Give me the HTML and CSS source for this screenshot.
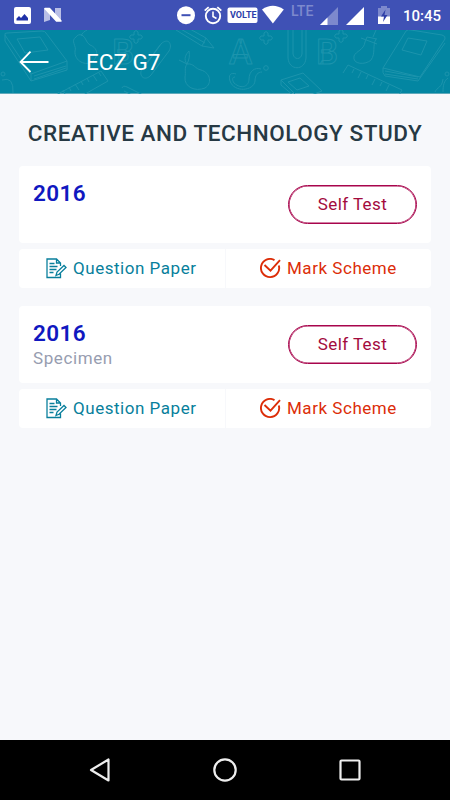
FILE: index.html
```html
<!DOCTYPE html>
<html lang="en">

<head>
    <meta charset="UTF-8">
    <meta name="viewport" content="width=device-width, initial-scale=1.0">
    <title>ECZ G7</title>
    <link rel="stylesheet" href="styles.css">
</head>

<body>
    <div class="status">
        <svg class="status-icons" viewBox="0 0 400 30" aria-hidden="true">
            <!-- picture -->
            <rect x="14" y="7" width="17" height="17" rx="2" fill="#fff" />
            <path d="M16.500 20.500v-2l2.500-2.500 2 2 3.500-4 3.500 4v2.500z" fill="#1f31a8" />
            <!-- android n -->
            <path d="M44 8v14l6-2v-8zM61 8v13l-6-2v-11z" fill="#b9bfe6" />
            <path d="M45 8.500h4.500l11.500 12.500h-4.500z" fill="#fff" stroke="#fff" stroke-width="1.500" stroke-linejoin="round" />
            <!-- do not disturb -->
            <circle cx="186" cy="15.200" r="9" fill="#fff" />
            <path d="M181.500 15.200h9" stroke="#3f51b5" stroke-width="2" />
            <!-- alarm -->
            <g fill="none" stroke="#fff" stroke-width="1.900">
                <circle cx="213" cy="16" r="7.200" />
                <path d="M213 11.500v5l3.500 2" stroke-width="1.600" />
                <path d="M204.700 10.600l4-3.500M221.300 10.600l-4-3.500" />
            </g>
            <rect x="227.500" y="7.500" width="30" height="15.500" rx="2" fill="#fff" />
            <!-- wifi -->
            <path d="M262 9.500q10.800-7.500 21.800 0l-10.900 14z" fill="#fff" />
            <!-- signal -->
            <path d="M338 7v18h-18z" fill="#7d89cd" />
            <path d="M327.500 17.500v7.500h-7.500z" fill="#fff" />
            <path d="M364 7v18h-18z" fill="#fff" />
            <!-- battery -->
            <path d="M378 8h3v-2h6v2h3v9h-12z" fill="#7d89cd" />
            <path d="M378 16.500h12v7.500h-12z" fill="#fff" />
            <path d="M385.500 9.500l-4.500 7h3l-1 5.500 4.500-7h-3z" fill="#3040a8" />
        </svg>
        <span class="volte">VOLTE</span>
        <span class="lte">LTE</span>
        <span class="time">10:45</span>
    </div>

    <header class="topbar">
        <svg class="doodles" viewBox="0 30 450 64" aria-hidden="true">
            <defs>
                <path id="plus" d="M-2-2v-3q2-3 4 0v3h3q3 2 0 4h-3v3q-2 3-4 0v-3h-3q-3-2 0-4z" />
                <path id="ruler" d="M0 21l5 8M5 19l2 4M11 16l2 4M17 13l4 6M23 10l2 4M29 7l2 4M35 4l4 6M41 2l2 3M-4 25l47-25 7 10-30 17" />
            </defs>
            <!-- books -->
            <path d="M5 35q-1-2 2-2l35-2q3 0 4 2l21 28-36 13zM5 35v6l26 40 36-11v-9M31 74v7M34 76l32-10M34 79l32-11M17 39l23-2 8 13-23 3z" />
            <path d="M406 31q2-2 5-1l31 5q4 1 3 4l-25 38-37-9zM383 68q-1 5 2 8l33 5 27-38M385 71l33 6M385 74l33 5M408 38l19 3-6 14-19-5z" />
            <path d="M281 80l22-7 19 18-22 8zM281 80v5l13 11M288 82l12-4 9 8-12 4z" />
            <!-- fruit -->
            <path d="M76 37c-6 4 1 9-1 14-1 10 11 16 18 10 7-7 3-14-3-16-4-2-4-8-8-10-2-1-5 0-6 2zM81 36c1-3 4-5 6-6" />
            <path d="M187 64c7-1 8 5 14 6 10 3 11 14 4 18-10 4-21-1-20-11 1-5-1-9 2-13zM187 64c-4-5-1-10 2-13 1 5 0 9-2 13M187 64l-8-4" />
            <path d="M365 42c-1 8-9 9-11 14-2 9 12 9 17 4 5-7 1-14 5-21M361 38l16 6M365 42l2-5 10 2M376 30l-3 7" />
            <!-- rulers -->
            <use href="#ruler" x="58" y="71" />
            <path d="M343 73l5-8 54 25-4 7M354 69l-2 4M361 72l-3 6M368 75l-2 4M375 79l-3 6M382 82l-2 4M389 85l-3 6" />
            <!-- pencils -->
            <path d="M176 30l26 16 12 2-8-10-16-9M179 28l26 15M202 46l4-8" />
            <path d="M122 88q1-3 5-1l16 8M124 91l8 4" />
            <!-- clips -->
            <path d="M146 65l15-21c7-7 12 0 8 7l-18 24c-6 7-13 1-9-6l18-24" />
            <path d="M288 30v28c1 13 17 13 18 0v-28M293 30v24c1 6 8 6 9 0v-24" />
            <!-- grades -->
            <text class="letter" x="112" y="64">B</text>
            <text class="letter" x="229" y="64">A</text>
            <text class="letter" x="316" y="64">B</text>
            <use href="#plus" x="136" y="37" />
            <use href="#plus" x="266" y="38" />
            <use href="#plus" x="341" y="36" />
            <!-- hooks -->
            <path d="M236 74c-5-2-8 1-6 7 4 12 24 10 25 0 0-6 3-9 7-9M235 77c-3 0-3 3-1 6 8 7 15 3 15-4 0-8 6-12 12-10M2 80q12-4 11 13M435 92c2-5 7-4 8-13M448 78c-4 3-5 7-5 14" />
            <circle cx="266" cy="68" r="2.300" />
            <circle cx="3" cy="74" r="2" />
            <circle cx="447" cy="74" r="2" />
        </svg>
        <svg class="back" viewBox="0 0 32 24" aria-label="Back"><path d="M12.500 1.700L2.500 12l10 10M2.500 12h28" /></svg>
        <h1 class="title">ECZ G7</h1>
    </header>

    <main class="content">
        <h2 class="subject">CREATIVE AND TECHNOLOGY STUDY</h2>

        <section class="paper">
            <div class="card">
                <div class="info">
                    <div class="year">2016</div>
                </div>
                <a class="self-test">Self Test</a>
            </div>
            <div class="links">
                <a class="question">
                    <svg class="icon" viewBox="0 0 21 21">
                        <path d="M14.500 8V5L10.500 1H1v18.500h13.500v-4M10.500 1v4h4M3.500 5.500h5M3.500 8.500h8M3.500 11.500h7M3.500 14.500h4M10 17.500l1-3.500 7-6.500 2 2-7 6.800z" />
                    </svg>
                    <span>Question Paper</span>
                </a>
                <a class="scheme">
                    <svg class="icon" viewBox="0 0 21 21">
                        <path d="M14.500 2.100A9.100 9.100 0 1 0 18.800 7.500M4.500 7l6 5.700L20 2.200" />
                    </svg>
                    <span>Mark Scheme</span>
                </a>
            </div>
        </section>

        <section class="paper">
            <div class="card">
                <div class="info">
                    <div class="year">2016</div>
                    <div class="type">Specimen</div>
                </div>
                <a class="self-test">Self Test</a>
            </div>
            <div class="links">
                <a class="question">
                    <svg class="icon" viewBox="0 0 21 21">
                        <path d="M14.500 8V5L10.500 1H1v18.500h13.500v-4M10.500 1v4h4M3.500 5.500h5M3.500 8.500h8M3.500 11.500h7M3.500 14.500h4M10 17.500l1-3.500 7-6.500 2 2-7 6.800z" />
                    </svg>
                    <span>Question Paper</span>
                </a>
                <a class="scheme">
                    <svg class="icon" viewBox="0 0 21 21">
                        <path d="M14.500 2.100A9.100 9.100 0 1 0 18.800 7.500M4.500 7l6 5.700L20 2.200" />
                    </svg>
                    <span>Mark Scheme</span>
                </a>
            </div>
        </section>
    </main>

    <nav class="navbar">
        <svg viewBox="0 0 26 26"><path d="M21.500 2.500v21L4 13z" /></svg>
        <svg viewBox="0 0 26 26"><circle cx="13" cy="13" r="10.700" /></svg>
        <svg viewBox="0 0 26 26"><rect x="3.500" y="3.500" width="19" height="19" rx="1" /></svg>
    </nav>
</body>

</html>
```
FILE: styles.css
```css
* {
    box-sizing: border-box;
}

body,
h1,
h2 {
    margin: 0;
    padding: 0;
}

body {
    width: 450px;
    height: 800px;
    display: flex;
    flex-direction: column;
    overflow: hidden;
    background: #f7f8fb;
    font-family: Roboto, "Liberation Sans", sans-serif;
}

/* status bar */
.status {
    position: relative;
    height: 30px;
    background: #3f51b5;
    color: #fff;
}

.status-icons {
    display: block;
    width: 400px;
    height: 30px;
}

.status span {
    position: absolute;
    white-space: nowrap;
}

.volte {
    left: 230px;
    top: 9px;
    font-size: 9px;
    line-height: 12px;
    font-weight: 700;
    color: #2c3eaa;
}

.lte {
    left: 291px;
    top: 3px;
    font-size: 14px;
    line-height: 16px;
    font-weight: 500;
    color: #7d89cd;
}

.time {
    right: 9px;
    top: 6px;
    font-size: 15px;
    line-height: 20px;
    font-weight: 500;
}

/* top bar */
.topbar {
    position: relative;
    height: 64px;
    display: flex;
    align-items: center;
    padding-left: 18px;
    background: #0386a2;
    border-bottom: 1px solid #5fa9ba;
}

.doodles {
    position: absolute;
    left: 0;
    top: 0;
    width: 450px;
    height: 64px;
    fill: none;
    stroke: #1c94ad;
    stroke-width: 1;
    stroke-linejoin: round;
}

.doodles .letter {
    font-size: 35px;
    font-weight: 500;
}

.back {
    position: relative;
    width: 32px;
    height: 24px;
    fill: none;
    stroke: #fff;
    stroke-width: 1.8;
}

.title {
    position: relative;
    margin-left: 36px;
    font-size: 22.5px;
    line-height: 28px;
    font-weight: 400;
    color: #fff;
}

/* content */
.content {
    flex: 1;
    padding: 25px 19px 0;
}

.subject {
    height: 28px;
    margin-bottom: 19px;
    font-size: 22.5px;
    line-height: 28px;
    font-weight: 500;
    letter-spacing: 0.54px;
    text-align: center;
    white-space: nowrap;
    color: #263944;
}

.paper {
    margin-bottom: 18px;
}

.card {
    display: flex;
    justify-content: space-between;
    height: 77px;
    padding: 14px 14px 0;
    background: #fff;
    border-radius: 4px;
}

.year {
    font-size: 22.5px;
    line-height: 27px;
    font-weight: 600;
    letter-spacing: 0.4px;
    color: #1018c0;
}

.type {
    font-size: 17px;
    line-height: 22px;
    letter-spacing: 0.6px;
    color: #979db0;
}

.self-test {
    width: 129px;
    height: 39px;
    margin-top: 5px;
    border: 1px solid #a8054c;
    border-radius: 20px;
    box-shadow: inset 0 0 0 0.6px #a8054c;
    font-size: 17px;
    line-height: 37px;
    letter-spacing: 0.4px;
    text-align: center;
    color: #a30b3d;
}

.links {
    display: grid;
    grid-template-columns: 206px 1fr;
    gap: 1px;
    height: 39px;
    margin-top: 6px;
}

.links a {
    display: flex;
    align-items: center;
    padding-bottom: 1px;
    background: #fff;
    font-size: 17px;
    letter-spacing: 0.53px;
}

.links .question {
    padding-left: 27px;
    border-radius: 4px 0 0 4px;
    color: #087f9c;
}

.links .scheme {
    padding-left: 34px;
    border-radius: 0 4px 4px 0;
    color: #dc2d08;
}

.icon {
    width: 21px;
    height: 21px;
    margin-right: 6px;
    fill: none;
    stroke: currentColor;
    stroke-width: 1.3;
}

.scheme .icon {
    stroke-width: 1.9;
}

/* android buttons */
.navbar {
    display: flex;
    justify-content: space-between;
    align-items: center;
    height: 60px;
    padding: 0 87px;
    background: #000;
}

.navbar svg {
    width: 26px;
    height: 26px;
    fill: none;
    stroke: #eee;
    stroke-width: 2.2;
    stroke-linejoin: round;
}
```
